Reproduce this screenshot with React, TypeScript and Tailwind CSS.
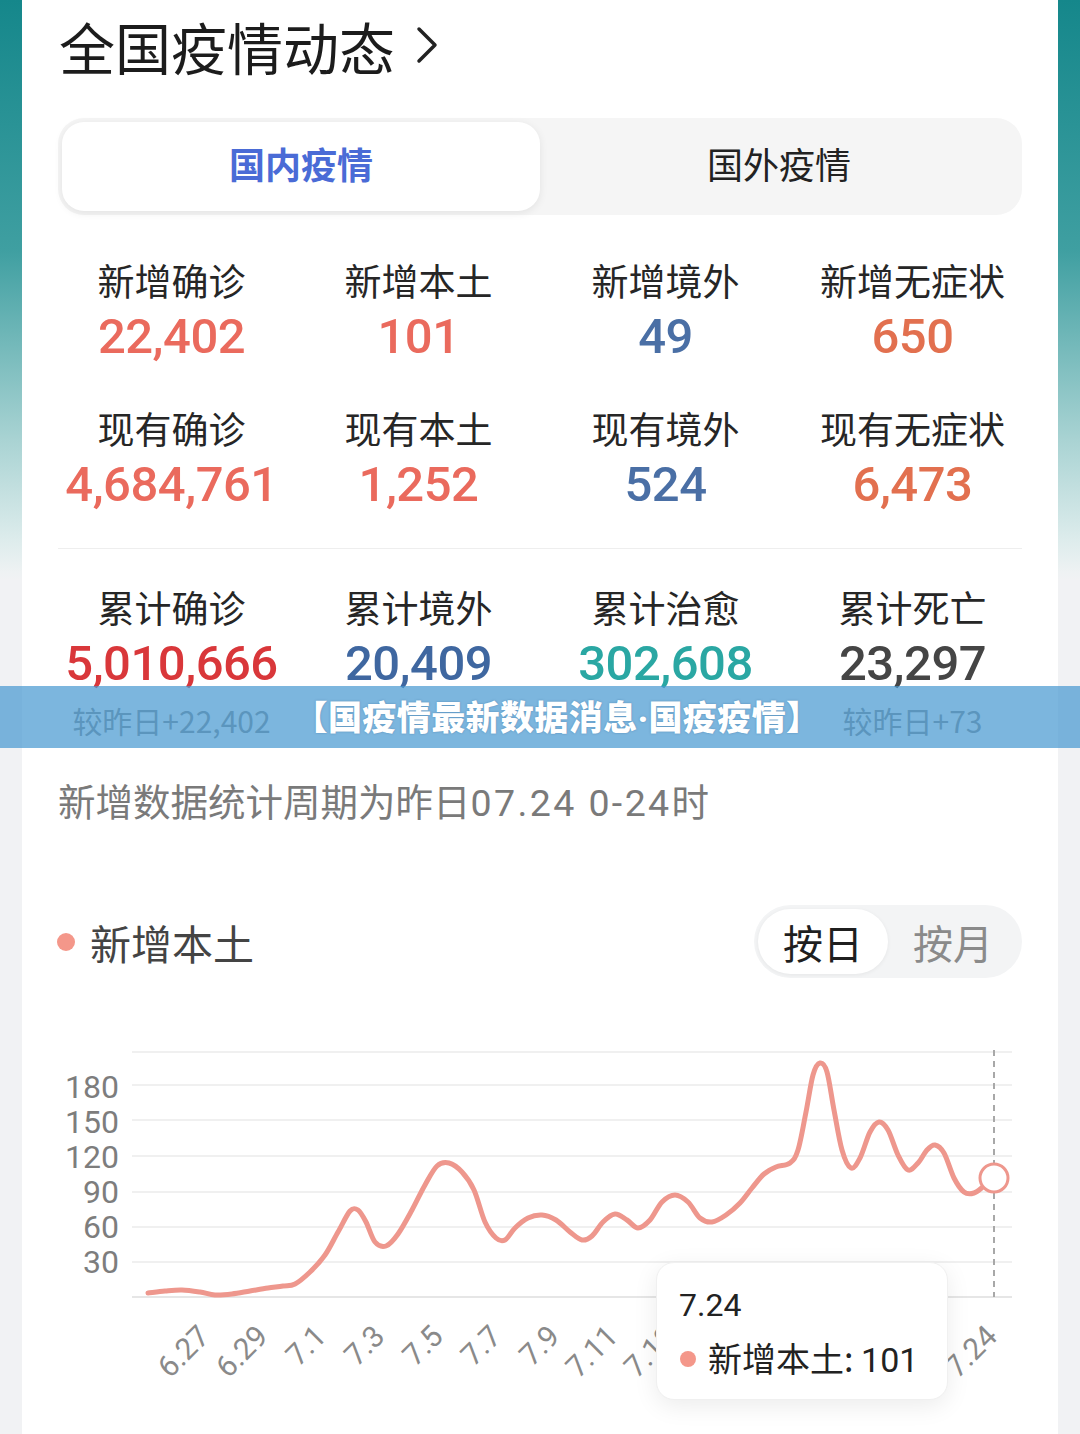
import React from 'react';

const CJK = '"Noto Sans CJK SC", "Noto Sans", sans-serif';
const NUM = 'Roboto, "Noto Sans CJK SC", sans-serif';

type Stat = { label: string; value: string; color: string; diff?: string };

const TOP_STATS: Stat[] = [
  { label: '新增确诊', value: '22,402', color: '#ea6a5d' },
  { label: '新增本土', value: '101', color: '#ea6a5d' },
  { label: '新增境外', value: '49', color: '#4a6fa5' },
  { label: '新增无症状', value: '650', color: '#e2704f' },
  { label: '现有确诊', value: '4,684,761', color: '#ea6a5d' },
  { label: '现有本土', value: '1,252', color: '#ea6a5d' },
  { label: '现有境外', value: '524', color: '#4a6fa5' },
  { label: '现有无症状', value: '6,473', color: '#e2704f' },
];

// the middle two "较昨日" lines sit under the banner and can't be read in the shot
const TOTAL_STATS: Stat[] = [
  { label: '累计确诊', value: '5,010,666', color: '#d9373a', diff: '较昨日+22,402' },
  { label: '累计境外', value: '20,409', color: '#3f67a0', diff: '' },
  { label: '累计治愈', value: '302,608', color: '#2aa7a3', diff: '' },
  { label: '累计死亡', value: '23,297', color: '#454545', diff: '较昨日+73' },
];

// line points, in page pixels
const LINE: [number, number][] = [
  [148, 1293], [165, 1291], [182, 1290], [200, 1292], [215, 1295], [232, 1294], [250, 1291],
  [268, 1288], [283, 1286], [295, 1284], [310, 1272], [325, 1255], [338, 1232], [350, 1211],
  [358, 1210], [366, 1222], [375, 1242], [386, 1246], [398, 1234], [412, 1210], [425, 1185],
  [437, 1166], [449, 1163], [462, 1172], [474, 1190], [485, 1222], [496, 1238], [505, 1240],
  [515, 1228], [528, 1218], [542, 1215], [556, 1220], [570, 1232], [582, 1240], [592, 1236],
  [603, 1222], [615, 1214], [627, 1220], [638, 1228], [650, 1220], [662, 1202], [675, 1195],
  [688, 1202], [700, 1218], [712, 1222], [726, 1215], [740, 1203], [752, 1188], [764, 1174],
  [776, 1167], [790, 1163], [798, 1150], [806, 1112], [813, 1075], [820, 1063], [827, 1072],
  [834, 1110], [842, 1150], [851, 1168], [860, 1158], [870, 1132], [879, 1122], [888, 1130],
  [898, 1155], [908, 1170], [918, 1163], [927, 1150], [935, 1145], [944, 1153], [954, 1178],
  [964, 1192], [974, 1193], [984, 1186], [994, 1178],
];

const smooth = (pts: [number, number][]) => {
  let d = `M${pts[0][0]} ${pts[0][1]}`;
  for (let i = 0; i < pts.length - 1; i++) {
    const p0 = pts[i - 1] || pts[i];
    const p1 = pts[i];
    const p2 = pts[i + 1];
    const p3 = pts[i + 2] || p2;
    const c1x = p1[0] + (p2[0] - p0[0]) / 6;
    const c1y = p1[1] + (p2[1] - p0[1]) / 6;
    const c2x = p2[0] - (p3[0] - p1[0]) / 6;
    const c2y = p2[1] - (p3[1] - p1[1]) / 6;
    d += ` C${c1x.toFixed(1)} ${c1y.toFixed(1)} ${c2x.toFixed(1)} ${c2y.toFixed(1)} ${p2[0]} ${p2[1]}`;
  }
  return d;
};

const GRID = [1052, 1085, 1120, 1156, 1192, 1227, 1262];
const Y_LABELS: [string, number][] = [
  ['180', 1087], ['150', 1122], ['120', 1157], ['90', 1192], ['60', 1227], ['30', 1262],
];
const X_LABELS: [string, number][] = [
  ['6.27', 2], ['6.29', 4], ['7.1', 6], ['7.3', 8], ['7.5', 10], ['7.7', 12], ['7.9', 14],
  ['7.11', 16], ['7.13', 18], ['7.15', 20], ['7.17', 22], ['7.19', 24], ['7.21', 26], ['7.24', 29],
];
const xAt = (i: number) => 148 + i * ((994 - 148) / 29);

const StatCell: React.FC<{ s: Stat }> = ({ s }) => (
  <div className="flex flex-col items-center">
    <div className="h-[44px] text-[37px] leading-[44px] text-[#262626]" style={{ fontFamily: CJK }}>
      {s.label}
    </div>
    <div
      className="mt-[5px] h-[60px] text-[49px] leading-[60px] font-medium tracking-[-0.5px]"
      style={{ fontFamily: NUM, color: s.color }}
    >
      {s.value}
    </div>
    {s.diff !== undefined && (
      <div className="mt-[6px] h-[40px] text-[30px] leading-[40px] text-[#8f8f8f]" style={{ fontFamily: CJK }}>
        {s.diff}
      </div>
    )}
  </div>
);

const Chart: React.FC = () => (
  <div className="relative -mx-[36px] h-[456px]">
    <svg width="1036" height="456" viewBox="22 978 1036 456" className="block">
      {GRID.map((y) => (
        <line key={y} x1="132" x2="1012" y1={y} y2={y} stroke="#f0f0f0" strokeWidth="2" />
      ))}
      <line x1="132" x2="1012" y1="1297" y2="1297" stroke="#e6e6e6" strokeWidth="2" />
      {Y_LABELS.map(([t, y]) => (
        <text key={t} x="119" y={y + 11} textAnchor="end" fontSize="32" fill="#7d7d7d" fontFamily="Roboto, sans-serif">
          {t}
        </text>
      ))}
      {X_LABELS.map(([t, i]) => {
        const x = xAt(i) + 5;
        return (
          <text
            key={t}
            x={x}
            y="1338"
            textAnchor="end"
            fontSize="30"
            fill="#8a8a8a"
            fontFamily="Roboto, sans-serif"
            transform={`rotate(-45 ${x} 1338)`}
          >
            {t}
          </text>
        );
      })}
      <line x1="994" x2="994" y1="1050" y2="1297" stroke="#a8a8a8" strokeWidth="2" strokeDasharray="6 5" />
      <path d={smooth(LINE)} fill="none" stroke="#ee978d" strokeWidth="5" strokeLinecap="round" strokeLinejoin="round" />
      <circle cx="994" cy="1178" r="14" fill="#fff" stroke="#ee978d" strokeWidth="3" />
    </svg>

    <div className="absolute left-[634px] top-[284px] w-[292px] h-[138px] rounded-[18px] bg-white border border-[#f0f0f0] shadow-[0_6px_24px_rgba(0,0,0,0.08)] px-[22px]">
      <div className="mt-[22px] text-[32px] leading-[40px] text-[#222]" style={{ fontFamily: NUM }}>
        7.24
      </div>
      <div className="mt-[13px] flex items-center gap-[12px] text-[34px] leading-[40px] text-[#222]" style={{ fontFamily: CJK }}>
        <span className="w-[16px] h-[16px] rounded-full bg-[#f4978a] ml-[1px]" />
        <span>
          新增本土: <span style={{ fontFamily: NUM }}>101</span>
        </span>
      </div>
    </div>
  </div>
);

const App: React.FC = () => {
  return (
    <div className="relative w-[1080px] h-[1434px] overflow-hidden bg-[linear-gradient(to_bottom,#15878b_0px,#3f9fa1_250px,#a9d3d3_440px,#ddecec_540px,#eef2f3_572px,#f1f2f4_580px,#f1f2f4_100%)]">
      <div className="mx-[22px] h-full bg-white px-[36px] pt-[16px]">
        {/* title */}
        <div className="flex items-center h-[60px]">
          <span className="text-[56px] leading-[60px] text-[#1c1c1c] pl-[1px]" style={{ fontFamily: CJK }}>
            全国疫情动态
          </span>
          <svg width="24" height="40" viewBox="0 0 24 40" className="ml-[20px] mt-[-2px]">
            <polyline points="4,4 20,20 4,36" fill="none" stroke="#222" strokeWidth="3.5" strokeLinecap="round" strokeLinejoin="round" />
          </svg>
        </div>

        {/* tabs */}
        <div className="mt-[42px] h-[97px] rounded-[26px] bg-[#f5f5f5] p-[4px] flex">
          <div className="flex-1 rounded-[22px] bg-white shadow-[0_2px_8px_rgba(0,0,0,0.08)] flex items-center justify-center">
            <span className="mb-[8px] text-[36px] font-bold text-[#4a6bd6]" style={{ fontFamily: CJK }}>
              国内疫情
            </span>
          </div>
          <div className="flex-1 flex items-center justify-center">
            <span className="mb-[8px] text-[36px] text-[#222]" style={{ fontFamily: CJK }}>
              国外疫情
            </span>
          </div>
        </div>

        {/* stats */}
        <div className="mt-[43px] -ml-[10px] w-[988px] grid grid-cols-4 gap-y-[39px]">
          {TOP_STATS.map((s) => (
            <StatCell key={s.label} s={s} />
          ))}
        </div>

        <div className="mt-[33px] h-px bg-[#eeeeee]" />

        <div className="mt-[36px] -ml-[10px] w-[988px] grid grid-cols-4">
          {TOTAL_STATS.map((s) => (
            <StatCell key={s.label} s={s} />
          ))}
        </div>

        <div className="mt-[36px] h-[48px] text-[37.5px] leading-[48px] text-[#7a7a7a]" style={{ fontFamily: CJK }}>
          新增数据统计周期为昨日<span className="tracking-[2.4px]" style={{ fontFamily: NUM }}>07.24 0-24</span>时
        </div>

        {/* legend + toggle */}
        <div className="mt-[81px] h-[73px] flex items-center justify-between">
          <div className="flex items-center">
            <span className="w-[18px] h-[18px] rounded-full bg-[#f4978a] ml-[-1px]" />
            <span className="ml-[15px] text-[41px] leading-[50px] text-[#444]" style={{ fontFamily: CJK }}>
              新增本土
            </span>
          </div>
          <div className="w-[268px] h-[73px] rounded-full bg-[#f3f4f5] p-[4px] flex">
            <div className="w-[130px] rounded-full bg-white shadow-[0_1px_4px_rgba(0,0,0,0.06)] flex items-center justify-center">
              <span className="text-[40px] text-[#1f1f1f]" style={{ fontFamily: CJK }}>按日</span>
            </div>
            <div className="flex-1 flex items-center justify-center">
              <span className="text-[40px] text-[#8a8a8a]" style={{ fontFamily: CJK }}>按月</span>
            </div>
          </div>
        </div>

        <Chart />
      </div>

      {/* overlay banner */}
      <div className="absolute left-0 right-0 top-[686px] h-[62px] bg-[rgba(68,151,208,0.7)] flex items-center justify-center pl-[34px]">
        <span
          className="text-[34px] font-black text-white tracking-[0.4px] [text-shadow:0_0_2px_rgba(40,90,140,0.5)]"
          style={{ fontFamily: CJK }}
        >
          【国疫情最新数据消息<span className="tracking-[0px]" style={{ fontFamily: NUM }}>·</span>国疫疫情】
        </span>
      </div>
    </div>
  );
};

export default App;
